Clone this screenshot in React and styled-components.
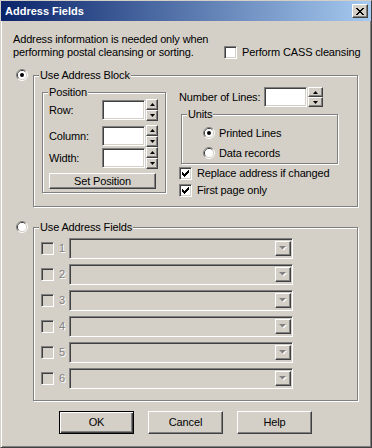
import React from "react";
import styled, { createGlobalStyle, css } from "styled-components";

const Global = createGlobalStyle`
  html, body { margin: 0; padding: 0; background: #d4d0c8; }
  *, *::before, *::after { box-sizing: border-box; }
`;

const raised = css`
  border: 1px solid;
  border-color: #fff #404040 #404040 #fff;
  box-shadow: inset -1px -1px 0 #808080;
  background: #d4d0c8;
`;

const sunken = css`
  border: 1px solid;
  border-color: #808080 #fff #fff #808080;
  box-shadow: inset 1px 1px 0 #404040, inset -1px -1px 0 #d4d0c8;
`;

const Window = styled.div`
  width: 372px;
  height: 448px;
  background: #d4d0c8;
  border: 1px solid;
  border-color: #d4d0c8 #404040 #404040 #d4d0c8;
  box-shadow: inset 1px 1px 0 #fff, inset -1px -1px 0 #808080;
  display: flex;
  flex-direction: column;
  font-family: "Liberation Sans", Arial, sans-serif;
  font-size: 11px;
  line-height: 13px;
  letter-spacing: -0.15px;
  color: #000;
`;

const TitleBar = styled.div`
  height: 20px;
  flex: none;
  display: flex;
  align-items: center;
  justify-content: space-between;
  padding: 0 3px 0 4px;
  background: linear-gradient(to right, #0a246a, #a6caf0);
`;

const TitleText = styled.span`
  color: #fff;
  font-weight: bold;
  font-size: 11px;
  letter-spacing: 0;
`;

const CloseButton = styled.div`
  ${raised};
  width: 16px;
  height: 14px;
  display: flex;
  align-items: center;
  justify-content: center;
`;

const Body = styled.div`
  flex: 1;
  display: flex;
  flex-direction: column;
  padding-top: 12px;
`;

const Intro = styled.div`
  display: flex;
  align-items: flex-end;
  padding-left: 12px;
`;

const IntroText = styled.div`
  width: 211px;
`;

const CheckRow = styled.label`
  display: flex;
  align-items: center;
  gap: 5px;
  height: ${(p) => p.$h || 13}px;
  white-space: nowrap;
`;

const CheckBoxBox = styled.span`
  ${sunken};
  width: 13px;
  height: 13px;
  flex: none;
  display: flex;
  align-items: center;
  justify-content: center;
  background: ${(p) => (p.$disabled ? "#d4d0c8" : "#fff")};
`;

const Section = styled.div`
  display: flex;
  align-items: flex-start;
  gap: 5px;
  padding-left: 15px;
  margin-top: ${(p) => p.$mt}px;
`;

const Group = styled.fieldset`
  margin: 0;
  margin-left: ${(p) => p.$ml || 0}px;
  margin-top: ${(p) => p.$mt || 0}px;
  min-width: 0;
  width: ${(p) => p.$w}px;
  padding: ${(p) => p.$pad};
  border: 1px solid #808080;
  box-shadow: inset 1px 1px 0 #fff, 1px 1px 0 #fff;
  flex: none;
`;

const Legend = styled.legend`
  padding: 0 1px;
  margin-left: ${(p) => p.$ml}px;
  background: #d4d0c8;
  line-height: 13px;
  font-size: 11px;
`;

const Columns = styled.div`
  display: flex;
  align-items: flex-start;
  gap: 13px;
`;

const FieldRow = styled.div`
  display: flex;
  align-items: center;
  height: 20px;
  margin-top: ${(p) => p.$mt || 0}px;
`;

const FieldLabel = styled.span`
  width: ${(p) => p.$w}px;
  flex: none;
  white-space: nowrap;
`;

const TextBox = styled.div`
  ${sunken};
  background: #fff;
  width: ${(p) => p.$w}px;
  height: 20px;
  flex: none;
`;

const SpinBox = styled.div`
  display: flex;
  flex-direction: column;
  width: ${(p) => p.$w}px;
  height: ${(p) => p.$h}px;
  margin-left: 1px;
  flex: none;
`;

const SpinBtn = styled.div`
  ${raised};
  flex: 1;
  display: flex;
  align-items: center;
  justify-content: center;
`;

const PushButton = styled.div`
  ${raised};
  width: ${(p) => p.$w}px;
  height: ${(p) => p.$h}px;
  margin-top: ${(p) => p.$mt || 0}px;
  display: flex;
  align-items: center;
  justify-content: center;
  ${(p) =>
    p.$default &&
    css`
      border: 1px solid #000;
      box-shadow: inset 1px 1px 0 #fff, inset -1px -1px 0 #404040,
        inset -2px -2px 0 #808080;
    `}
`;

const RightCol = styled.div`
  display: flex;
  flex-direction: column;
  margin-top: 1px;
`;

const RadioRow = styled.label`
  display: flex;
  align-items: center;
  gap: 4px;
  height: 20px;
`;

const CheckList = styled.div`
  display: flex;
  flex-direction: column;
  margin-top: 1px;
`;

const FieldList = styled.div`
  display: flex;
  flex-direction: column;
  gap: 5px;
`;

const FieldsRow = styled.div`
  display: flex;
  align-items: center;
  height: 21px;
`;

const RowNumber = styled.span`
  width: 10px;
  margin-left: 5px;
  color: #808080;
  text-shadow: 1px 1px 0 #fff;
`;

const Combo = styled.div`
  ${sunken};
  background: #d4d0c8;
  width: 224px;
  height: 21px;
  display: flex;
  justify-content: flex-end;
  align-items: stretch;
  padding: 2px 1px 2px 0;
`;

const ComboBtn = styled.div`
  ${raised};
  width: 16px;
  display: flex;
  align-items: center;
  justify-content: center;
`;

const ButtonRow = styled.div`
  display: flex;
  gap: 14px;
  padding-left: 58px;
  margin-top: 10px;
`;

const CLOSE_ROWS = ["11....11", ".11..11.", "..1111..", "...11...", "..1111..", ".11..11.", "11....11"];
const CHECK_ROWS = ["......1", ".....11", "1...111", "11.111.", "11111..", ".111...", "..1...."];

function Pixels({ rows, color }) {
  const rects = [];
  rows.forEach((r, y) =>
    r.split("").forEach((c, x) => {
      if (c === "1") rects.push(<rect key={x + "-" + y} x={x} y={y} width="1" height="1" fill={color} />);
    })
  );
  return (
    <svg width={rows[0].length} height={rows.length} shapeRendering="crispEdges">
      {rects}
    </svg>
  );
}

function Checkbox({ checked, disabled }) {
  return (
    <CheckBoxBox $disabled={disabled}>
      {checked && <Pixels rows={CHECK_ROWS} color="#000" />}
    </CheckBoxBox>
  );
}

function Radio({ checked }) {
  return (
    <svg width="12" height="12" viewBox="0 0 12 12" style={{ flex: "none" }}>
      <path d="M2.11 9.89 A5.5 5.5 0 0 1 9.89 2.11" fill="none" stroke="#808080" />
      <path d="M9.89 2.11 A5.5 5.5 0 0 1 2.11 9.89" fill="none" stroke="#fff" />
      <path d="M2.82 9.18 A4.5 4.5 0 0 1 9.18 2.82" fill="none" stroke="#404040" />
      <path d="M9.18 2.82 A4.5 4.5 0 0 1 2.82 9.18" fill="none" stroke="#d4d0c8" />
      <circle cx="6" cy="6" r="4" fill="#fff" />
      {checked && <circle cx="6" cy="6" r="2" fill="#000" />}
    </svg>
  );
}

function Spin({ w, h }) {
  return (
    <SpinBox $w={w} $h={h}>
      <SpinBtn>
        <svg width="5" height="3" viewBox="0 0 5 3">
          <polygon points="2.5,0 5,3 0,3" fill="#000" />
        </svg>
      </SpinBtn>
      <SpinBtn>
        <svg width="5" height="3" viewBox="0 0 5 3">
          <polygon points="0,0 5,0 2.5,3" fill="#000" />
        </svg>
      </SpinBtn>
    </SpinBox>
  );
}

function ComboArrow() {
  return (
    <svg width="8" height="5" viewBox="0 0 8 5">
      <polygon points="1,1 8,1 4.5,4.5" fill="#fff" />
      <polygon points="0,0 7,0 3.5,3.5" fill="#808080" />
    </svg>
  );
}

export default function App() {
  return (
    <>
      <Global />
      <Window>
        <TitleBar>
          <TitleText>Address Fields</TitleText>
          <CloseButton>
            <Pixels rows={CLOSE_ROWS} color="#000" />
          </CloseButton>
        </TitleBar>
        <Body>
          <Intro>
            <IntroText>
              Address information is needed only when
              <br />
              performing postal cleansing or sorting.
            </IntroText>
            <CheckRow>
              <Checkbox />
              <span>Perform CASS cleansing</span>
            </CheckRow>
          </Intro>

          <Section $mt={10}>
            <Radio checked />
            <Group $w={325} $pad="4px 8px 7px 8px">
              <Legend $ml={-3}>Use Address Block</Legend>
              <Columns>
                <Group $w={124} $pad="1px 6px 3px 6px">
                  <Legend $ml={-1}>Position</Legend>
                  <FieldRow>
                    <FieldLabel $w={53}>Row:</FieldLabel>
                    <TextBox $w={43} />
                    <Spin w={12} h={22} />
                  </FieldRow>
                  <FieldRow $mt={6}>
                    <FieldLabel $w={53}>Column:</FieldLabel>
                    <TextBox $w={43} />
                    <Spin w={12} h={22} />
                  </FieldRow>
                  <FieldRow $mt={2}>
                    <FieldLabel $w={53}>Width:</FieldLabel>
                    <TextBox $w={43} />
                    <Spin w={12} h={22} />
                  </FieldRow>
                  <PushButton $w={107} $h={16} $mt={5}>
                    Set Position
                  </PushButton>
                </Group>
                <RightCol>
                  <FieldRow>
                    <FieldLabel $w={85}>Number of Lines:</FieldLabel>
                    <TextBox $w={43} />
                    <Spin w={15} h={20} />
                  </FieldRow>
                  <Group $w={157} $ml={2} $mt={1} $pad="2px 0 0 21px">
                    <Legend $ml={-16}>Units</Legend>
                    <RadioRow>
                      <Radio checked />
                      <span>Printed Lines</span>
                    </RadioRow>
                    <RadioRow>
                      <Radio />
                      <span>Data records</span>
                    </RadioRow>
                  </Group>
                  <CheckList>
                    <CheckRow $h={17}>
                      <Checkbox checked />
                      <span>Replace address if changed</span>
                    </CheckRow>
                    <CheckRow $h={17}>
                      <Checkbox checked />
                      <span>First page only</span>
                    </CheckRow>
                  </CheckList>
                </RightCol>
              </Columns>
            </Group>
          </Section>

          <Section $mt={14}>
            <Radio />
            <Group $w={325} $pad="4px 0 11px 7px">
              <Legend $ml={-2}>Use Address Fields</Legend>
              <FieldList>
                {[1, 2, 3, 4, 5, 6].map((n) => (
                  <FieldsRow key={n}>
                    <Checkbox disabled />
                    <RowNumber>{n}</RowNumber>
                    <Combo>
                      <ComboBtn>
                        <ComboArrow />
                      </ComboBtn>
                    </Combo>
                  </FieldsRow>
                ))}
              </FieldList>
            </Group>
          </Section>

          <ButtonRow>
            <PushButton $w={75} $h={23} $default>
              OK
            </PushButton>
            <PushButton $w={75} $h={23}>
              Cancel
            </PushButton>
            <PushButton $w={75} $h={23}>
              Help
            </PushButton>
          </ButtonRow>
        </Body>
      </Window>
    </>
  );
}
